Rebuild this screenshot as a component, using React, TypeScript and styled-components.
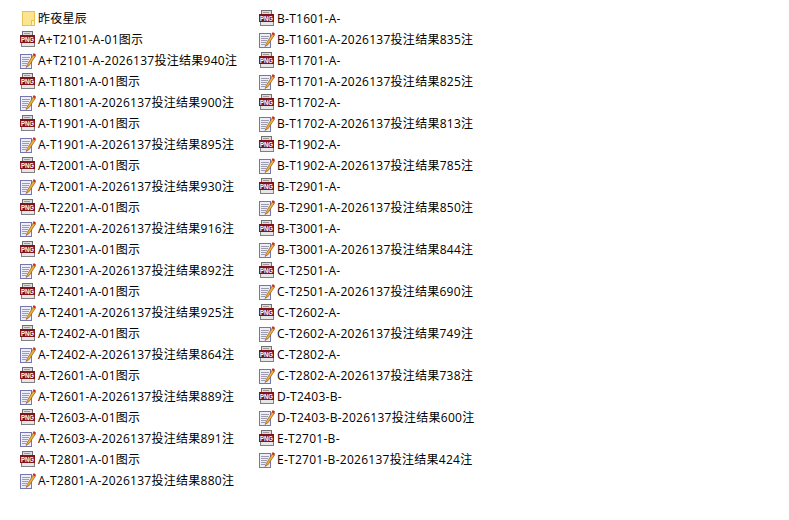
import React from "react";
import styled, { createGlobalStyle } from "styled-components";

const Global = createGlobalStyle`
  html, body { margin: 0; padding: 0; background: #fff; }
`;

const Page = styled.div`
  width: 789px;
  height: 520px;
  box-sizing: border-box;
  padding: 8px 0 0 19px;
  display: flex;
  gap: 20px;
  overflow: hidden;
  background: #fff;
  font-family: "Open Sans", "Noto Sans CJK SC", sans-serif;
  font-size: 12px;
  letter-spacing: 0.27px;
  color: #000;
`;
const Column = styled.div`
  width: 219px;
  display: flex;
  flex-direction: column;
`;
const Row = styled.div`
  height: 21px;
  display: flex;
  align-items: center;
  gap: 2px;
  white-space: nowrap;
`;
const Name = styled.span`
  line-height: 21px;
`;
const IconBox = styled.svg`
  width: 17px;
  height: 17px;
  flex: none;
`;
const IconLabel = styled.text`
  font-family: "Liberation Sans", sans-serif;
  font-size: 7px;
  font-weight: 700;
  letter-spacing: 0;
  fill: #fff;
`;

const PngIcon = () => (
  <IconBox viewBox="0 0 17 17">
    <rect x="3.500" y="0.500" width="10" height="4" fill="#dcdcdc" stroke="#707070" />
    <rect x="2.500" y="11" width="13" height="4.500" fill="#e6e6e6" stroke="#808080" />
    <rect x="5" y="2" width="6" height="1" fill="#9a9a9a" />
    <rect x="1" y="4" width="15" height="8" fill="#7f141c" />
    <IconLabel x="8.500" y="10.500" textAnchor="middle" textLength="13" lengthAdjust="spacingAndGlyphs">
      PNG
    </IconLabel>
  </IconBox>
);
const NoteIcon = () => (
  <IconBox viewBox="0 0 17 17">
    <rect x="1.500" y="2.500" width="11" height="14" fill="#eeeefa" stroke="#7476ad" />
    <path d="M3 5.500h8M3 7.500h7M3 9.500h6M3 11.500h5M3 13.500h4" stroke="#9c9cae" />
    <path d="M14.500 2.500L8.500 12l-1.500 3.500 3.200-2L16.500 4z" fill="#f2ae32" stroke="#7d4f1c" strokeWidth=".6" />
    <path d="M14.800 1l2.200 1.700-1 1.800-2.300-1.600z" fill="#c42e28" />
  </IconBox>
);
const FolderIcon = () => (
  <IconBox viewBox="0 0 17 17">
    <rect x="3.500" y="1.500" width="12" height="14" fill="#fde58f" stroke="#e4c254" />
    <rect x="12.500" y="10.500" width="3" height="5" fill="#fff2bd" stroke="#e4c254" />
  </IconBox>
);

type Kind = "folder" | "png" | "note";
const icons: Record<Kind, React.FC> = { folder: FolderIcon, png: PngIcon, note: NoteIcon };

const left: [Kind, string][] = [
  ["folder", "昨夜星辰"],
  ["png", "A+T2101-A-01图示"],
  ["note", "A+T2101-A-2026137投注结果940注"],
  ["png", "A-T1801-A-01图示"],
  ["note", "A-T1801-A-2026137投注结果900注"],
  ["png", "A-T1901-A-01图示"],
  ["note", "A-T1901-A-2026137投注结果895注"],
  ["png", "A-T2001-A-01图示"],
  ["note", "A-T2001-A-2026137投注结果930注"],
  ["png", "A-T2201-A-01图示"],
  ["note", "A-T2201-A-2026137投注结果916注"],
  ["png", "A-T2301-A-01图示"],
  ["note", "A-T2301-A-2026137投注结果892注"],
  ["png", "A-T2401-A-01图示"],
  ["note", "A-T2401-A-2026137投注结果925注"],
  ["png", "A-T2402-A-01图示"],
  ["note", "A-T2402-A-2026137投注结果864注"],
  ["png", "A-T2601-A-01图示"],
  ["note", "A-T2601-A-2026137投注结果889注"],
  ["png", "A-T2603-A-01图示"],
  ["note", "A-T2603-A-2026137投注结果891注"],
  ["png", "A-T2801-A-01图示"],
  ["note", "A-T2801-A-2026137投注结果880注"],
];
const right: [Kind, string][] = [
  ["png", "B-T1601-A-"],
  ["note", "B-T1601-A-2026137投注结果835注"],
  ["png", "B-T1701-A-"],
  ["note", "B-T1701-A-2026137投注结果825注"],
  ["png", "B-T1702-A-"],
  ["note", "B-T1702-A-2026137投注结果813注"],
  ["png", "B-T1902-A-"],
  ["note", "B-T1902-A-2026137投注结果785注"],
  ["png", "B-T2901-A-"],
  ["note", "B-T2901-A-2026137投注结果850注"],
  ["png", "B-T3001-A-"],
  ["note", "B-T3001-A-2026137投注结果844注"],
  ["png", "C-T2501-A-"],
  ["note", "C-T2501-A-2026137投注结果690注"],
  ["png", "C-T2602-A-"],
  ["note", "C-T2602-A-2026137投注结果749注"],
  ["png", "C-T2802-A-"],
  ["note", "C-T2802-A-2026137投注结果738注"],
  ["png", "D-T2403-B-"],
  ["note", "D-T2403-B-2026137投注结果600注"],
  ["png", "E-T2701-B-"],
  ["note", "E-T2701-B-2026137投注结果424注"],
];

const FileColumn = ({ items }: { items: [Kind, string][] }) => (
  <Column>
    {items.map(([kind, name]) => {
      const Icon = icons[kind];
      return (
        <Row key={name}>
          <Icon />
          <Name>{name}</Name>
        </Row>
      );
    })}
  </Column>
);

export default function App() {
  return (
    <Page>
      <Global />
      <FileColumn items={left} />
      <FileColumn items={right} />
    </Page>
  );
}
